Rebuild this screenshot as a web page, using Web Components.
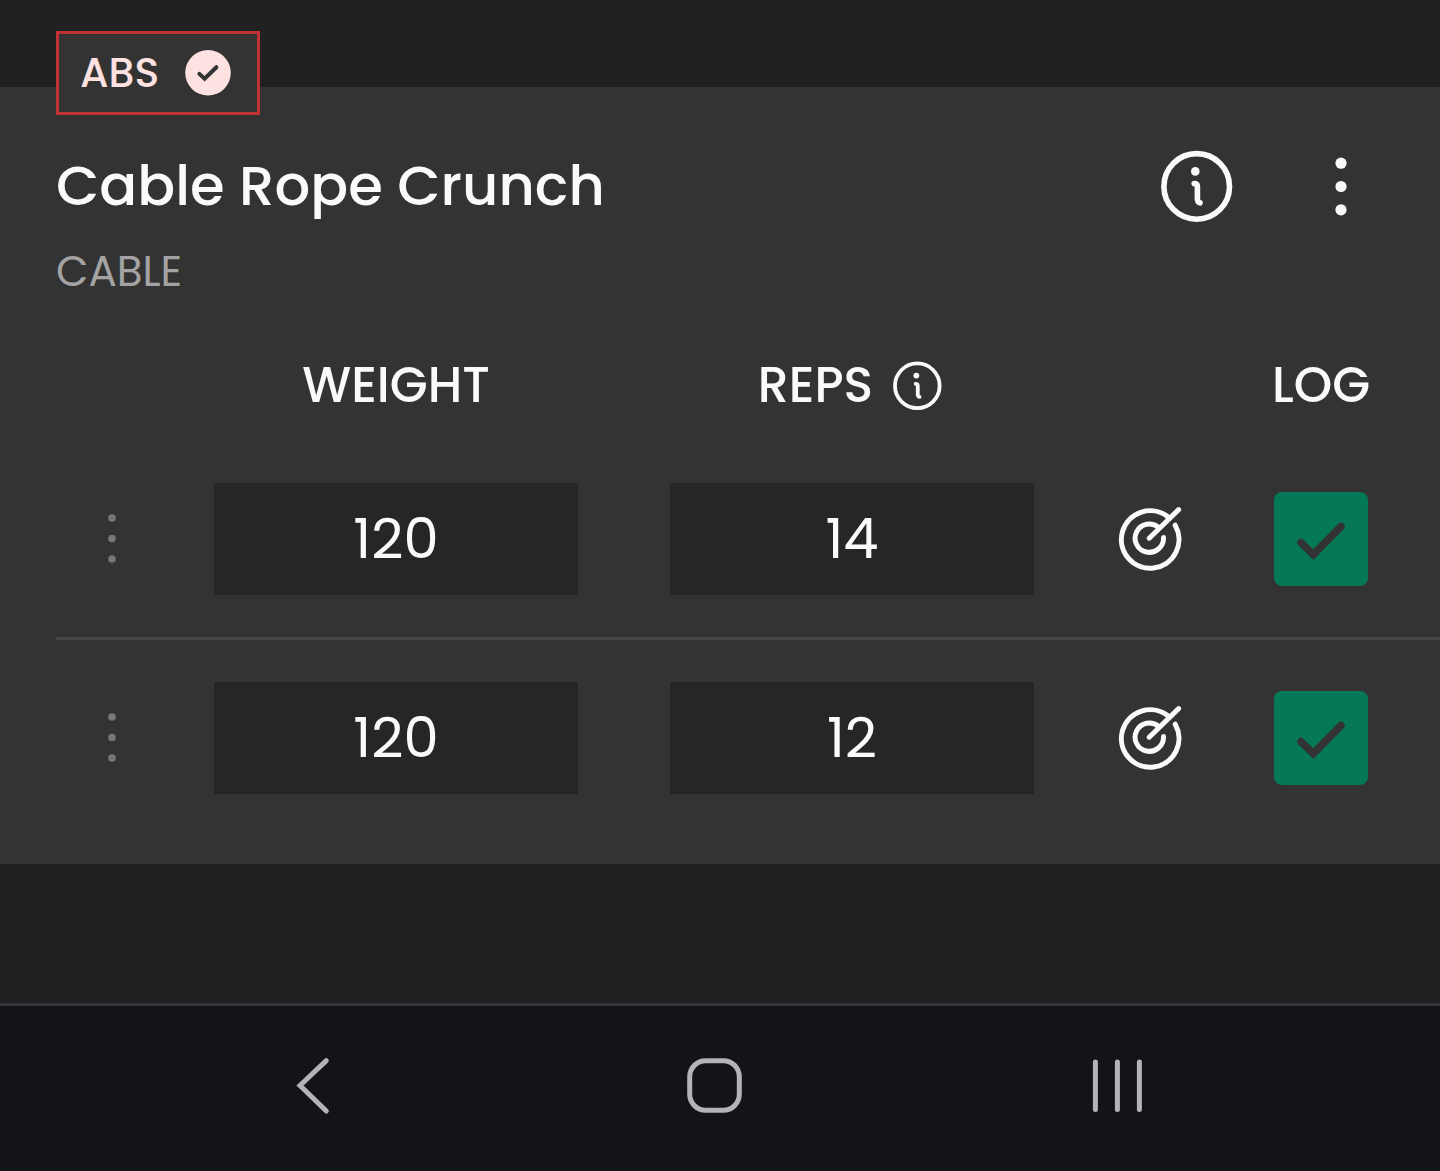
<!DOCTYPE html>
<html lang="en">
<head>
  <meta charset="utf-8">
  <meta name="viewport" content="width=device-width, initial-scale=1">
  <title>Workout</title>
  <style>
    body {
      margin: 0;
      background: #212121;
      color: #fafafa;
      font-family: Poppins, Inter, "Open Sans", sans-serif;
    }
  </style>
</head>
<body>
  <workout-screen>
    <exercise-card>
      <muscle-badge slot="badge">ABS</muscle-badge>
      <span slot="name">Cable Rope Crunch</span>
      <span slot="equipment">CABLE</span>
      <set-table sets='[{"weight": 120, "reps": 14}, {"weight": 120, "reps": 12}]'></set-table>
    </exercise-card>
    <system-nav slot="nav"></system-nav>
  </workout-screen>

  <script>
    const icons = {
      info: {
        box: '0 0 72 72',
        body: `<g stroke-width="5.6"><circle cx="35.7" cy="36.4" r="32.8"/>
          <circle cx="34.3" cy="21.4" r="4.3" fill="currentColor" stroke="none"/>
          <path d="M33.2 33.6c2 0 3.2 1 3.2 3V49c0 2 .8 3.4 2.6 3.8"/></g>`
      },
      more: {
        box: '0 0 12 60',
        body: `<g fill="currentColor" stroke="none"><circle cx="6" cy="7.2" r="5.6"/><circle cx="6" cy="30.5" r="5.6"/><circle cx="6" cy="53.8" r="5.6"/></g>`
      },
      drag: {
        box: '0 0 8 50',
        body: `<g fill="currentColor" stroke="none"><circle cx="4" cy="4" r="3.8"/><circle cx="4" cy="24.5" r="3.8"/><circle cx="4" cy="45" r="3.8"/></g>`
      },
      target: {
        box: '0 0 64 64',
        body: `<path d="M50.2 10A28.8 28.8 0 1 0 57.2 18.2M40.6 20.4A14.2 14.2 0 1 0 45.5 30.6M31.2 31.2L60.6 2.6"/>`
      },
      check: {
        box: '0 0 94 94',
        body: `<path stroke-width="7.6" d="M27 50.6L39.3 62.6L67 34.5"/>`
      },
      badge: {
        box: '0 0 46 46',
        body: `<circle cx="23" cy="22.8" r="22.8" fill="currentColor" stroke="none"/>
          <path stroke="#333" stroke-width="4" d="M14.4 23.9L19.6 28.8L31.4 17.2"/>`
      },
      back: {
        box: '0 0 56 56',
        body: `<path d="M41.3 2.6L15 27.5L41.3 53"/>`
      },
      home: {
        box: '0 0 56 56',
        body: `<rect x="2.7" y="2.7" width="49.6" height="49.6" rx="16"/>`
      },
      recents: {
        box: '0 0 56 56',
        body: `<path d="M6.4 4V51.4M28.4 4V51.4M50.4 4V51.4"/>`
      }
    };

    class AppIcon extends HTMLElement {
      constructor() {
        super();
        this.attachShadow({mode: 'open'});
      }

      connectedCallback() {
        const {box, body} = icons[this.getAttribute('name')];
        const [, , width, height] = box.split(' ');

        this.shadowRoot.innerHTML = `
          <style>
            :host {
              display: block;
              flex: none;
              width: var(--icon-width, ${width}px);
              height: var(--icon-height, ${height}px);
            }

            svg {
              display: block;
              width: 100%;
              height: 100%;
              overflow: visible;
            }
          </style>
          <svg viewBox="${box}" fill="none" stroke="currentColor" stroke-width="5" stroke-linecap="round" aria-hidden="true">${body}</svg>
        `;
      }
    }

    class MuscleBadge extends HTMLElement {
      constructor() {
        super();

        this.attachShadow({mode: 'open'}).innerHTML = `
          <style>
            :host {
              display: inline-flex;
              align-items: center;
              gap: 26px;
              box-sizing: border-box;
              height: 84px;
              padding: 0 26px 0 21px;
              border: 3px solid #bf3334;
              background: #333;
              color: #fee2e2;
              font-size: 41px;
              font-weight: 500;
              line-height: 48px;
            }
          </style>
          <span><slot></slot></span>
          <app-icon name="badge"></app-icon>
        `;
      }
    }

    class ExerciseCard extends HTMLElement {
      constructor() {
        super();

        this.attachShadow({mode: 'open'}).innerHTML = `
          <style>
            :host {
              display: block;
              position: relative;
              padding: 57px 0 28px 56px;
              background: #333;
            }

            /* sits across the card's top edge */
            slot[name="badge"] {
              display: block;
              position: absolute;
              top: -56px;
              left: 56px;
            }

            header {
              display: flex;
              align-items: center;
              padding-right: 27px;
            }

            h2 {
              flex: 1;
              margin: 0;
              font-size: 56px;
              font-weight: 500;
              line-height: 84px;
            }

            button {
              display: grid;
              place-items: center;
              width: 144px;
              height: 84px;
              padding: 0;
              border: 0;
              background: none;
              color: inherit;
              cursor: pointer;
            }

            p {
              margin: 12px 0 25px;
              color: #a3a3a3;
              font-size: 42px;
              line-height: 64px;
            }
          </style>
          <slot name="badge"></slot>
          <header>
            <h2><slot name="name"></slot></h2>
            <button type="button" aria-label="Exercise info"><app-icon name="info"></app-icon></button>
            <button type="button" aria-label="Exercise menu"><app-icon name="more"></app-icon></button>
          </header>
          <p><slot name="equipment"></slot></p>
          <slot></slot>
        `;
      }
    }

    class SetTable extends HTMLElement {
      constructor() {
        super();

        this.attachShadow({mode: 'open'}).innerHTML = `
          <style>
            :host {
              display: block;
            }

            table {
              width: 100%;
              table-layout: fixed;
              border-collapse: separate;
              border-spacing: 0;
            }

            .handle-col { width: 112px; }
            .target-col { width: 140px; }
            .log-col { width: 220px; }

            th {
              height: 112px;
              padding: 0;
              font-size: 49px;
              font-weight: 500;
              line-height: 64px;
            }

            td {
              padding: 42px 0;
            }

            tr:not(:last-child) td {
              border-bottom: 3px solid #484848;
            }

            td.field {
              padding: 42px 46px;
            }

            th.log, td.log {
              padding-right: 18px;
            }

            .reps {
              display: flex;
              align-items: center;
              justify-content: center;
              gap: 20px;
              padding-right: 4px;
            }

            button {
              display: grid;
              place-items: center;
              margin: 0 auto;
              padding: 0;
              border: 0;
              background: none;
              color: inherit;
              cursor: pointer;
            }

            .reps button {
              margin: 0;
              --icon-width: 49px;
              --icon-height: 49px;
            }

            .handle {
              color: #777;
            }

            input[type="text"] {
              display: block;
              box-sizing: border-box;
              width: 100%;
              height: 112px;
              padding: 0 0 2px;
              border: 0;
              border-radius: 0;
              background: #262626;
              color: inherit;
              font: inherit;
              font-size: 56px;
              text-align: center;
            }

            label {
              display: grid;
              width: 94px;
              margin: 0 auto;
              color: #333;
            }

            label > * {
              grid-area: 1 / 1;
            }

            input[type="checkbox"] {
              appearance: none;
              width: 94px;
              height: 94px;
              margin: 0;
              border-radius: 8px;
              background: #4a4a4a;
            }

            input[type="checkbox"]:checked {
              background: #047857;
            }

            label app-icon {
              position: relative;
              pointer-events: none;
            }

            input:not(:checked) + app-icon {
              visibility: hidden;
            }
          </style>
          <table>
            <colgroup>
              <col class="handle-col">
              <col>
              <col>
              <col class="target-col">
              <col class="log-col">
            </colgroup>
            <thead>
              <tr>
                <th></th>
                <th scope="col">WEIGHT</th>
                <th scope="col">
                  <div class="reps">
                    REPS
                    <button type="button" aria-label="Reps info"><app-icon name="info"></app-icon></button>
                  </div>
                </th>
                <th></th>
                <th scope="col" class="log">LOG</th>
              </tr>
            </thead>
            <tbody></tbody>
          </table>
        `;
      }

      connectedCallback() {
        const sets = JSON.parse(this.getAttribute('sets'));

        this.shadowRoot.querySelector('tbody').innerHTML = sets.map(({weight, reps}, i) => `
          <tr>
            <td><button type="button" class="handle" aria-label="Set ${i + 1} menu"><app-icon name="drag"></app-icon></button></td>
            <td class="field"><input type="text" inputmode="decimal" aria-label="Set ${i + 1} weight" value="${weight}"></td>
            <td class="field"><input type="text" inputmode="numeric" aria-label="Set ${i + 1} reps" value="${reps}"></td>
            <td><button type="button" aria-label="Set ${i + 1} target"><app-icon name="target"></app-icon></button></td>
            <td class="log">
              <label>
                <input type="checkbox" aria-label="Log set ${i + 1}" checked>
                <app-icon name="check"></app-icon>
              </label>
            </td>
          </tr>
        `).join('');
      }
    }

    class SystemNav extends HTMLElement {
      constructor() {
        super();

        this.attachShadow({mode: 'open'}).innerHTML = `
          <style>
            :host {
              display: block;
              border-top: 3px solid #35363a;
              background: #131418;
              color: #b4b4b6;
            }

            nav {
              display: grid;
              grid-template-columns: repeat(3, 1fr);
              padding: 0 122px 6px 112px;
            }

            button {
              display: grid;
              place-items: center;
              height: 159px;
              padding: 0;
              border: 0;
              background: none;
              color: inherit;
              cursor: pointer;
            }
          </style>
          <nav>
            <button type="button" aria-label="Back"><app-icon name="back"></app-icon></button>
            <button type="button" aria-label="Home"><app-icon name="home"></app-icon></button>
            <button type="button" aria-label="Recents"><app-icon name="recents"></app-icon></button>
          </nav>
        `;
      }
    }

    class WorkoutScreen extends HTMLElement {
      constructor() {
        super();

        this.attachShadow({mode: 'open'}).innerHTML = `
          <style>
            :host {
              display: flex;
              flex-direction: column;
              min-height: 100vh;
            }

            main {
              flex: 1;
              padding: 87px 0 48px;
            }
          </style>
          <main><slot></slot></main>
          <slot name="nav"></slot>
        `;
      }
    }

    customElements.define('app-icon', AppIcon);
    customElements.define('muscle-badge', MuscleBadge);
    customElements.define('exercise-card', ExerciseCard);
    customElements.define('set-table', SetTable);
    customElements.define('system-nav', SystemNav);
    customElements.define('workout-screen', WorkoutScreen);
  </script>
</body>
</html>
